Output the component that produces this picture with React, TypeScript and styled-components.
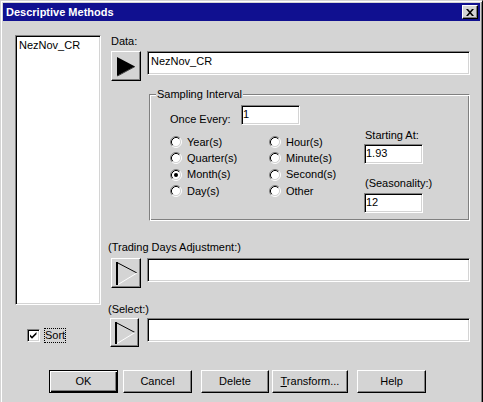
import React from "react";
import styled, { createGlobalStyle, css } from "styled-components";

const FACE = "#d4d4d4";
const SHADOW = "#808080";

const GlobalStyle = createGlobalStyle`
  html, body { margin: 0; padding: 0; background: ${FACE}; overflow: hidden; }
  body {
    font-family: "Liberation Sans", Arial, sans-serif;
    font-size: 11px;
    line-height: 13px;
    color: #000;
  }
  * { box-sizing: border-box; }
`;

const raised = css`
  border: 1px solid;
  border-color: #fff #000 #000 #fff;
  box-shadow: inset -1px -1px ${SHADOW};
  background: ${FACE};
`;

const sunken = css`
  border: 1px solid;
  border-color: ${SHADOW} #fff #fff ${SHADOW};
  box-shadow: inset 1px 1px #000, inset -1px -1px ${FACE};
  background: #fff;
`;

const Window = styled.div`
  width: 483px;
  height: 412px;
  background: ${FACE};
  border: 1px solid;
  border-color: ${FACE} #000 #000 ${FACE};
  box-shadow: inset 1px 1px #fff, inset -1px -1px ${SHADOW};
  padding: 2px;
  display: flex;
  flex-direction: column;
`;

const TitleBar = styled.div`
  display: flex;
  align-items: center;
  height: 18px;
  flex-shrink: 0;
  background: #101090;
  padding-left: 3px;
`;

const TitleText = styled.div`
  flex: 1;
  color: #fff;
  font-weight: bold;
  line-height: 13px;
`;

const CloseButton = styled.div`
  ${raised};
  width: 16px;
  height: 14px;
  margin-right: 2px;
  display: flex;
  align-items: center;
  justify-content: center;
`;

const Body = styled.div`
  padding: 14px 0 0 12px;
`;

const MainRow = styled.div`
  display: flex;
  align-items: flex-start;
`;

const LeftColumn = styled.div`
  width: 86px;
  display: flex;
  flex-direction: column;
`;

const ListBox = styled.div`
  ${sunken};
  height: 270px;
  padding: 3px 0 0 3px;
`;

const SortRow = styled.div`
  display: flex;
  align-items: center;
  margin: 23px 0 0 12px;
`;

const CheckBox = styled.span`
  ${sunken};
  width: 13px;
  height: 13px;
  display: flex;
  align-items: center;
  justify-content: center;
`;

const FocusLabel = styled.span`
  margin-left: 4px;
  padding: 1px 1px;
  outline: 1px dotted #000;
  outline-offset: -1px;
`;

const RightColumn = styled.div`
  margin-left: 7px;
  width: 362px;
  display: flex;
  flex-direction: column;
`;

const FieldLabel = styled.div<{ $top: number; $indent?: number }>`
  margin-top: ${(p) => p.$top}px;
  padding-left: ${(p) => p.$indent ?? 0}px;
  height: 13px;
  white-space: nowrap;
`;

const SelectorRow = styled.div<{ $top: number }>`
  display: flex;
  align-items: flex-start;
  margin-top: ${(p) => p.$top}px;
`;

const ButtonSlot = styled.div`
  width: 39px;
  flex-shrink: 0;
`;

const PickButton = styled.div<{ $size: number; $offset: number }>`
  ${raised};
  width: ${(p) => p.$size}px;
  height: ${(p) => p.$size}px;
  margin-left: ${(p) => p.$offset}px;
  display: flex;
  align-items: center;
  justify-content: center;
`;

const TextField = styled.div`
  ${sunken};
  flex: 1;
  height: 24px;
  padding: 3px 0 0 3px;
`;

const GroupBox = styled.div`
  position: relative;
  margin: 13px 0 0 41px;
  height: 127px;
  border: 1px solid;
  border-color: ${SHADOW} #fff #fff ${SHADOW};
  box-shadow: inset 1px 1px #fff, inset -1px -1px ${SHADOW};
  padding: 10px 0 0 20px;
  display: flex;
`;

const GroupTitle = styled.span`
  position: absolute;
  top: -7px;
  left: 6px;
  padding: 0 1px;
  background: ${FACE};
`;

const LeftPart = styled.div`
  width: 194px;
  display: flex;
  flex-direction: column;
`;

const OnceRow = styled.div`
  display: flex;
  height: 20px;
`;

const OnceLabel = styled.div`
  width: 71px;
  align-self: flex-end;
  margin-bottom: -1px;
`;

const SmallField = styled.div<{ $top?: number }>`
  ${sunken};
  width: 59px;
  height: 20px;
  margin-top: ${(p) => p.$top ?? 0}px;
  padding: 2px 0 0 1px;
`;

const RadioGrid = styled.div`
  display: grid;
  grid-template-columns: 99px 1fr;
  grid-template-rows: repeat(4, 16.33px);
  grid-auto-flow: column;
  margin-top: 9px;
`;

const RadioItem = styled.div`
  display: flex;
  align-items: center;
  gap: 5px;
  white-space: nowrap;
`;

const RightPart = styled.div`
  display: flex;
  flex-direction: column;
  padding-top: 24px;
`;

const SideLabel = styled.div<{ $top?: number }>`
  margin-top: ${(p) => p.$top ?? 0}px;
  padding-left: 1px;
  height: 13px;
  white-space: nowrap;
`;

const ButtonRow = styled.div`
  display: flex;
  margin-top: 23px;
  padding-left: 34px;
`;

const DialogButton = styled.div<{ $width: number; $gap: number; $default?: boolean }>`
  ${raised};
  width: ${(p) => p.$width}px;
  height: 23px;
  margin-left: ${(p) => p.$gap}px;
  display: flex;
  align-items: center;
  justify-content: center;
  ${(p) =>
    p.$default &&
    css`
      border-color: #000;
      box-shadow: inset 1px 1px #fff, inset -1px -1px #000, inset -2px -2px ${SHADOW};
    `}
`;

const CloseGlyph = () => (
  <svg width="8" height="7" viewBox="0 0 8 7">
    <path d="M0 0h2l2 2.2L6 0h2L5 3.5L8 7H6L4 4.8L2 7H0l3-3.5z" fill="#000" />
  </svg>
);

const SolidArrow = () => (
  <svg width="28" height="28" viewBox="0 0 28 28">
    <polygon points="5,5 5,24 23,14.5" fill="#000" />
    <line x1="5.5" y1="24" x2="23" y2="14.5" stroke="#404040" strokeWidth="1" />
  </svg>
);

const HollowArrow = ({ size }: { size: number }) => (
  <svg width={size - 2} height={size - 2} viewBox={`0 0 ${size - 2} ${size - 2}`}>
    <rect x="4" y="3" width="2" height={size - 7} fill="#000" />
    <line x1="5" y1="3.5" x2={size - 5} y2={(size - 2) / 2} stroke="#000" strokeWidth="1" />
    <line x1="6" y1={size - 4.5} x2={size - 5} y2={(size - 2) / 2} stroke="#fff" strokeWidth="1" />
  </svg>
);

const RadioIcon = ({ checked }: { checked?: boolean }) => (
  <svg width="12" height="12" viewBox="0 0 12 12">
    <circle cx="6" cy="6" r="4.5" fill="#fff" />
    <path d="M2.11 9.89A5.5 5.5 0 0 1 9.89 2.11" fill="none" stroke={SHADOW} strokeWidth="1" />
    <path d="M9.89 2.11A5.5 5.5 0 0 1 2.11 9.89" fill="none" stroke="#fff" strokeWidth="1" />
    <path d="M2.82 9.18A4.5 4.5 0 0 1 9.18 2.82" fill="none" stroke="#000" strokeWidth="1" />
    <path d="M9.18 2.82A4.5 4.5 0 0 1 2.82 9.18" fill="none" stroke={FACE} strokeWidth="1" />
    {checked && <circle cx="6" cy="6" r="2" fill="#000" />}
  </svg>
);

const CheckGlyph = () => (
  <svg width="9" height="9" viewBox="0 0 9 9">
    <path d="M1 3.5l2 2L7.5 1v2.2L3 7.7 1 5.7z" fill="#000" />
  </svg>
);

const Radio = ({ label, checked }: { label: string; checked?: boolean }) => (
  <RadioItem>
    <RadioIcon checked={checked} />
    <span>{label}</span>
  </RadioItem>
);

export default function App() {
  return (
    <>
      <GlobalStyle />
      <Window>
        <TitleBar>
          <TitleText>Descriptive Methods</TitleText>
          <CloseButton>
            <CloseGlyph />
          </CloseButton>
        </TitleBar>
        <Body>
          <MainRow>
            <LeftColumn>
              <ListBox>NezNov_CR</ListBox>
              <SortRow>
                <CheckBox>
                  <CheckGlyph />
                </CheckBox>
                <FocusLabel>Sort</FocusLabel>
              </SortRow>
            </LeftColumn>
            <RightColumn>
              <FieldLabel $top={0} $indent={3}>
                Data:
              </FieldLabel>
              <SelectorRow $top={3}>
                <ButtonSlot>
                  <PickButton $size={30} $offset={3}>
                    <SolidArrow />
                  </PickButton>
                </ButtonSlot>
                <TextField>NezNov_CR</TextField>
              </SelectorRow>

              <GroupBox>
                <GroupTitle>Sampling Interval</GroupTitle>
                <LeftPart>
                  <OnceRow>
                    <OnceLabel>Once Every:</OnceLabel>
                    <SmallField>1</SmallField>
                  </OnceRow>
                  <RadioGrid>
                    <Radio label="Year(s)" />
                    <Radio label="Quarter(s)" />
                    <Radio label="Month(s)" checked />
                    <Radio label="Day(s)" />
                    <Radio label="Hour(s)" />
                    <Radio label="Minute(s)" />
                    <Radio label="Second(s)" />
                    <Radio label="Other" />
                  </RadioGrid>
                </LeftPart>
                <RightPart>
                  <SideLabel>Starting At:</SideLabel>
                  <SmallField $top={2}>1.93</SmallField>
                  <SideLabel $top={13}>(Seasonality:)</SideLabel>
                  <SmallField $top={3}>12</SmallField>
                </RightPart>
              </GroupBox>

              <FieldLabel $top={20}>(Trading Days Adjustment:)</FieldLabel>
              <SelectorRow $top={4}>
                <ButtonSlot>
                  <PickButton $size={30} $offset={3}>
                    <HollowArrow size={30} />
                  </PickButton>
                </ButtonSlot>
                <TextField />
              </SelectorRow>

              <FieldLabel $top={15}>(Select:)</FieldLabel>
              <SelectorRow $top={2}>
                <ButtonSlot>
                  <PickButton $size={29} $offset={2}>
                    <HollowArrow size={29} />
                  </PickButton>
                </ButtonSlot>
                <TextField />
              </SelectorRow>
            </RightColumn>
          </MainRow>

          <ButtonRow>
            <DialogButton $width={69} $gap={0} $default>
              OK
            </DialogButton>
            <DialogButton $width={69} $gap={5}>
              Cancel
            </DialogButton>
            <DialogButton $width={68} $gap={9}>
              Delete
            </DialogButton>
            <DialogButton $width={76} $gap={3}>
              <span>
                <u>T</u>ransform...
              </span>
            </DialogButton>
            <DialogButton $width={69} $gap={9}>
              Help
            </DialogButton>
          </ButtonRow>
        </Body>
      </Window>
    </>
  );
}
